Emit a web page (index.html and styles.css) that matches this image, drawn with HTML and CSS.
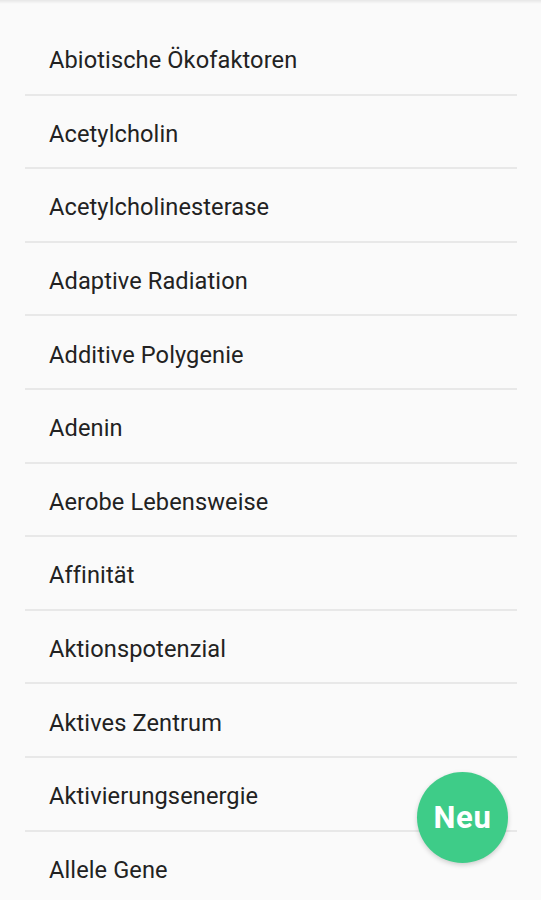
FILE: index.html
```html
<!DOCTYPE html>
<html lang="de">
<head>
  <meta charset="UTF-8" />
  <meta name="viewport" content="width=device-width, initial-scale=1" />
  <title>Biologie Begriffe</title>
  <link rel="stylesheet" href="styles.css">
</head>
<body>
  <div class="app">
    <div class="top-shadow"></div>
    <ul class="term-list">
      <li class="term">Abiotische Ökofaktoren</li>
      <li class="term">Acetylcholin</li>
      <li class="term">Acetylcholinesterase</li>
      <li class="term">Adaptive Radiation</li>
      <li class="term">Additive Polygenie</li>
      <li class="term">Adenin</li>
      <li class="term">Aerobe Lebensweise</li>
      <li class="term">Affinität</li>
      <li class="term">Aktionspotenzial</li>
      <li class="term">Aktives Zentrum</li>
      <li class="term">Aktivierungsenergie</li>
      <li class="term">Allele Gene</li>
    </ul>
    <button class="fab">Neu</button>
  </div>
</body>
</html>
```

FILE: styles.css
```css
body {
  margin: 0;
  padding: 0;
  background-color: #fafafa;
  font-family: Roboto, "Noto Sans", sans-serif;
  color: #222;
}

.app {
  position: relative;
  height: 900px;
  overflow: hidden;
}

.top-shadow {
  position: absolute;
  top: 0;
  left: 0;
  right: 0;
  height: 4px;
  background: linear-gradient(to bottom, rgba(0, 0, 0, 0.08), rgba(0, 0, 0, 0));
}

.term-list {
  list-style: none;
  margin: 0;
  padding: 22px 0 0;
  height: 856px;
  overflow: hidden;
}

.term {
  box-sizing: border-box;
  height: 73.6px;
  margin: 0 24px 0 25px;
  padding: 5px 0 0 24px;
  border-bottom: 2px solid #e8e8e8;
  display: flex;
  align-items: center;
  font-size: 23.6px;
  letter-spacing: 0.1px;
}

.fab {
  position: absolute;
  left: 417px;
  top: 772px;
  width: 91px;
  height: 91px;
  border: none;
  border-radius: 50%;
  background-color: #3ecc88;
  color: #fff;
  font-family: Roboto, "Noto Sans", sans-serif;
  font-weight: 700;
  font-size: 31px;
  letter-spacing: 0.6px;
  padding: 0;
  box-shadow: 0 2px 5px rgba(0, 0, 0, 0.18);
}
```
